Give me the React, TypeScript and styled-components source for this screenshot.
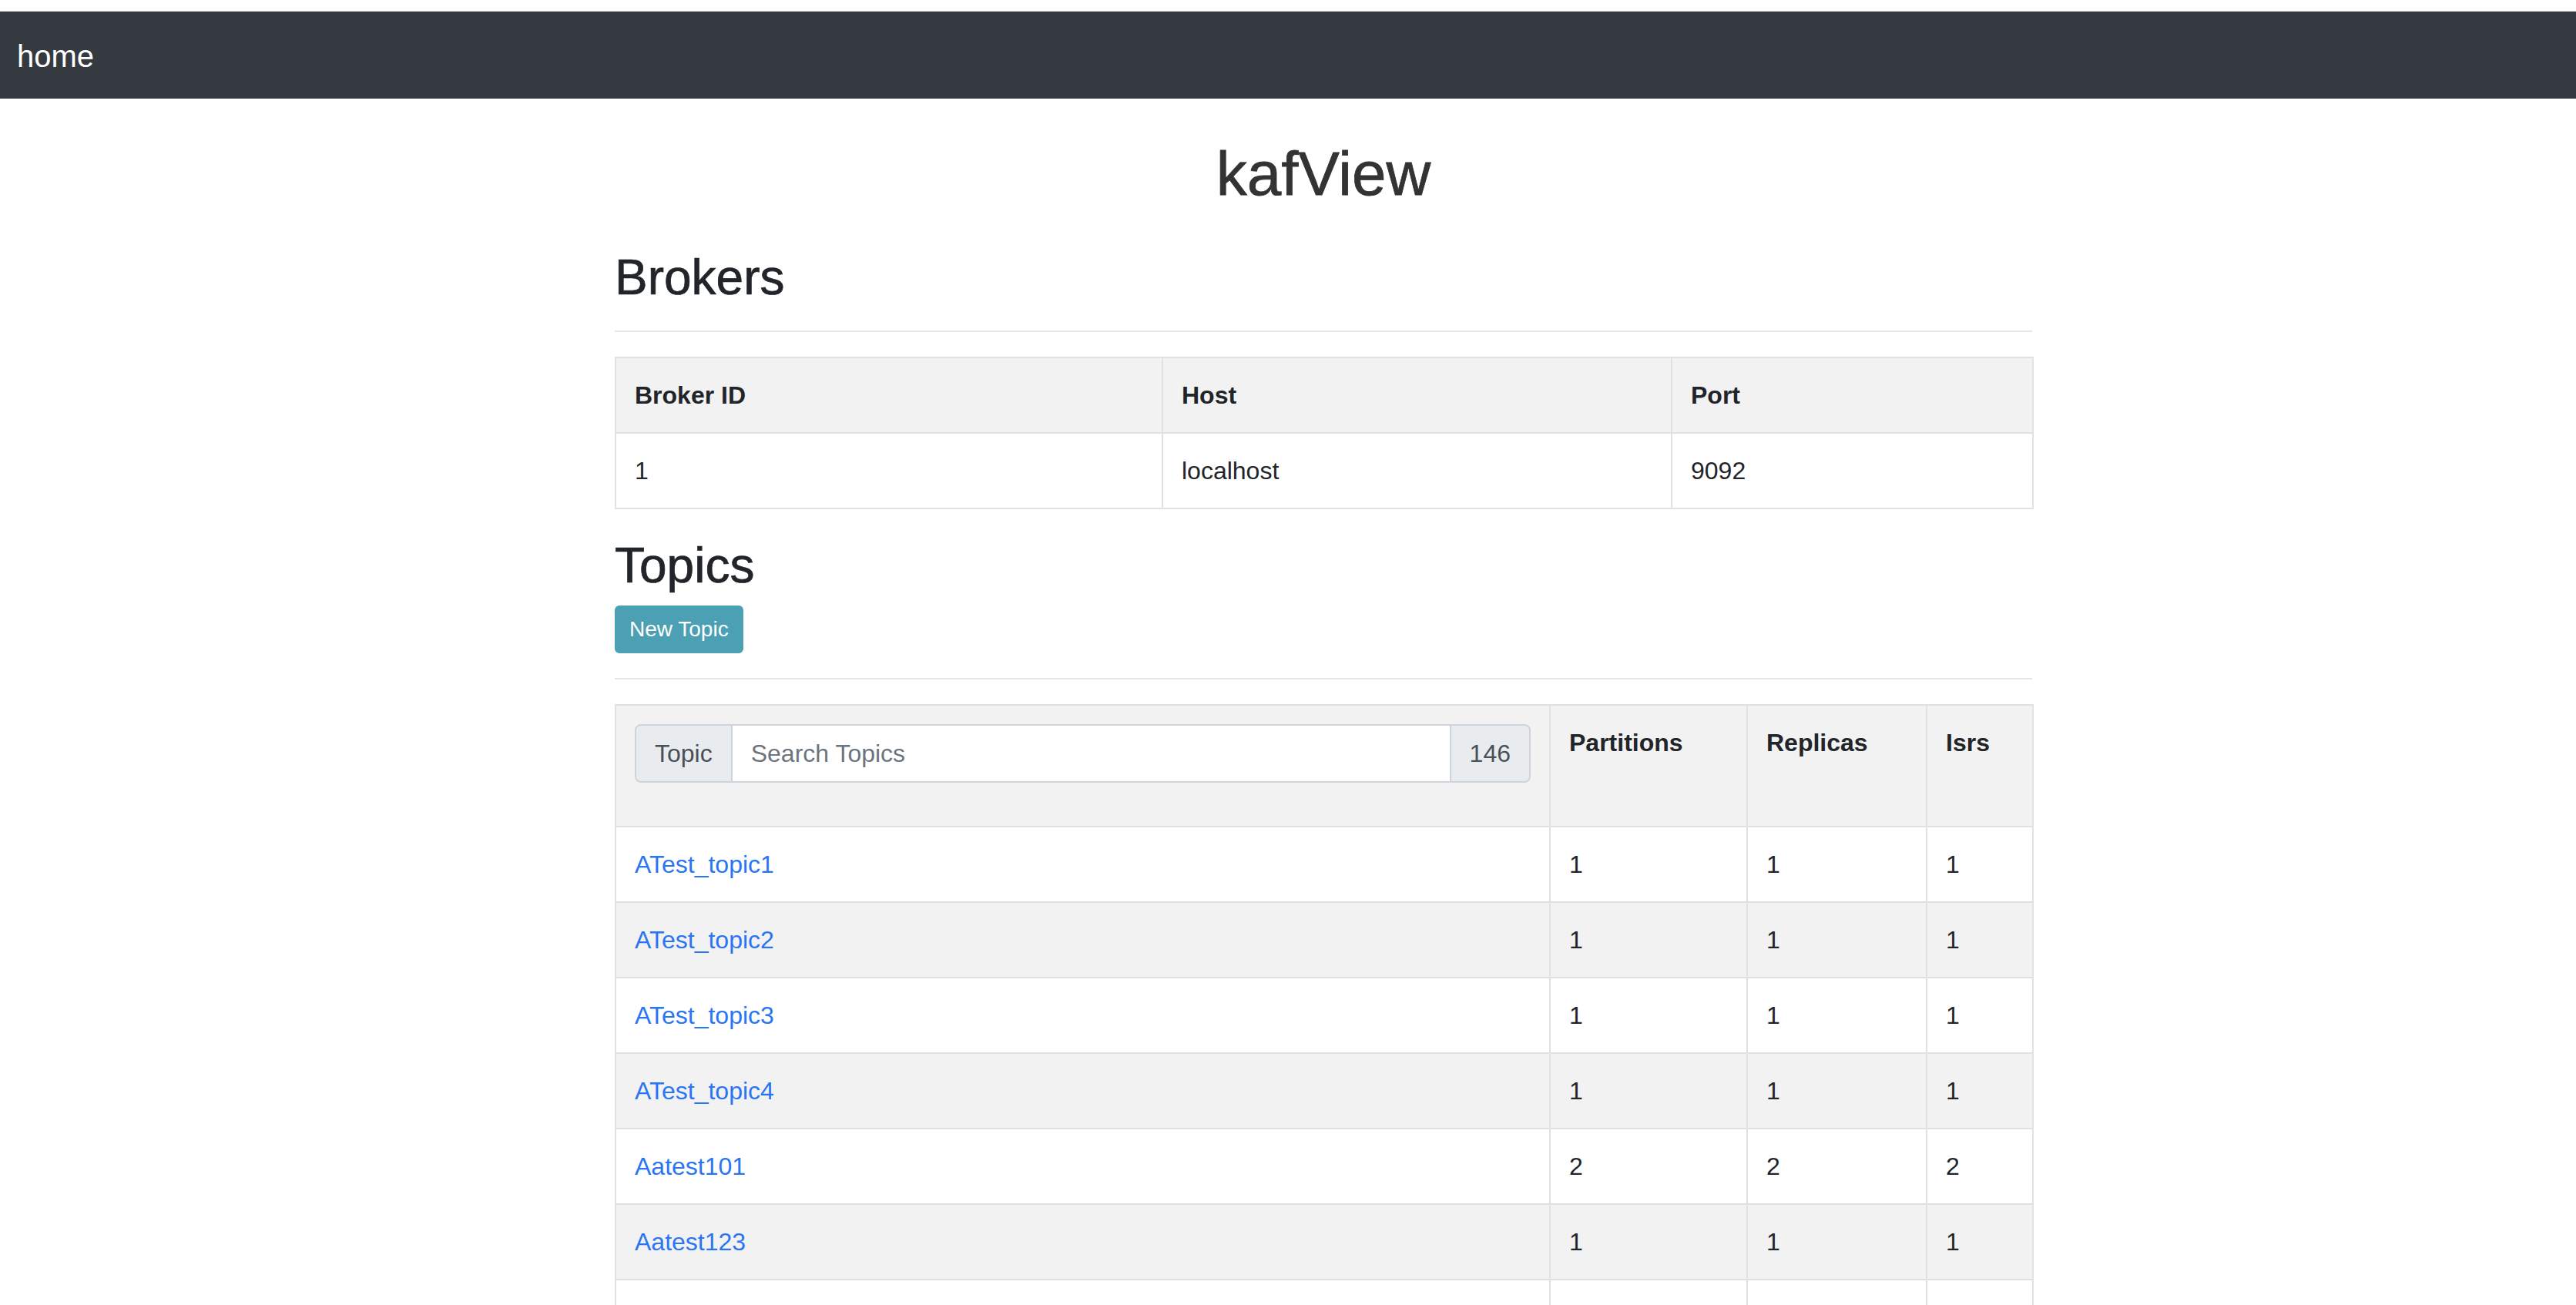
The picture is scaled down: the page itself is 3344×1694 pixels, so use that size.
import React from 'react';
import styled, { createGlobalStyle } from 'styled-components';

const GlobalStyle = createGlobalStyle`
  html, body {
    margin: 0;
    padding: 0;
    background: #fff;
  }
  body {
    font-family: "Liberation Sans", Arial, Helvetica, sans-serif;
    font-size: 32px;
    line-height: 1.5;
    color: #212529;
  }
  * {
    box-sizing: border-box;
  }
`;

const TopStrip = styled.div`
  height: 15px;
  background: #fff;
  border-bottom: 1px solid #e4e4e4;
`;

const Navbar = styled.nav`
  height: 113px;
  background: #343a40;
  display: flex;
  align-items: center;
  padding: 3px 22px 0;
`;

const Brand = styled.a`
  color: #fff;
  font-size: 40px;
  line-height: 60px;
  text-decoration: none;
`;

const Main = styled.main`
  width: 1840px;
  margin-left: 798px;
  padding-bottom: 64px;
  display: flex;
  flex-direction: column;
`;

// headings are medium weight in the original, fake it with a thin stroke
const Title = styled.h1`
  margin: 50px 0 0;
  font-size: 80px;
  line-height: 96px;
  font-weight: 400;
  text-align: center;
  color: #333;
  -webkit-text-stroke: 0.8px #333;
`;

const SectionTitle = styled.h2<{ $top: number }>`
  margin: ${(p) => p.$top}px 0 0;
  font-size: 64px;
  line-height: 77px;
  font-weight: 400;
  color: #212529;
  -webkit-text-stroke: 0.7px #212529;
`;

const Button = styled.button`
  align-self: flex-start;
  margin: 13px 0 2px;
  padding: 8px 17px;
  font-family: inherit;
  font-size: 28px;
  line-height: 42px;
  color: #fff;
  background: #4ba0b4;
  border: 2px solid #4ba0b4;
  border-radius: 6px;
  cursor: pointer;
`;

const Divider = styled.hr`
  width: 100%;
  margin: 30px 0 32px;
  border: 0;
  border-top: 2px solid #e5e5e5;
`;

const Table = styled.table`
  width: 100%;
  border-collapse: collapse;
  table-layout: fixed;
  border: 2px solid #dee2e6;
`;

const Col = styled.col<{ $w: number }>`
  width: ${(p) => p.$w}px;
`;

const Row = styled.tr<{ $shaded?: boolean }>`
  background: ${(p) => (p.$shaded ? '#f2f2f2' : '#fff')};
`;

const Cell = styled.td<{ $head?: boolean }>`
  border: 2px solid #dee2e6;
  padding: 24px;
  vertical-align: top;
  line-height: 48px;
  font-weight: ${(p) => (p.$head ? 700 : 400)};
  white-space: nowrap;
`;

const TopicLink = styled.a`
  color: #2a75f3;
  text-decoration: none;
`;

const InputGroup = styled.div`
  display: flex;
  height: 76px;
  margin-bottom: 32px;
`;

const Addon = styled.span<{ $side: 'left' | 'right' }>`
  display: flex;
  align-items: center;
  padding: 0 24px;
  background: #e9ecef;
  border: 2px solid #ced4da;
  color: #495057;
  font-size: 32px;
  font-weight: 400;
  border-radius: ${(p) => (p.$side === 'left' ? '8px 0 0 8px' : '0 8px 8px 0')};
`;

const SearchInput = styled.input`
  flex: 1;
  min-width: 0;
  height: 100%;
  padding: 0 24px;
  border: 2px solid #ced4da;
  border-left: 0;
  border-right: 0;
  font-family: inherit;
  font-size: 32px;
  color: #495057;
  background: #fff;
  outline: none;
  &::placeholder {
    color: #6c757d;
  }
`;

const brokers = [{ id: 1, host: 'localhost', port: 9092 }];

const topics = [
  { name: 'ATest_topic1', partitions: 1, replicas: 1, isrs: 1 },
  { name: 'ATest_topic2', partitions: 1, replicas: 1, isrs: 1 },
  { name: 'ATest_topic3', partitions: 1, replicas: 1, isrs: 1 },
  { name: 'ATest_topic4', partitions: 1, replicas: 1, isrs: 1 },
  { name: 'Aatest101', partitions: 2, replicas: 2, isrs: 2 },
  { name: 'Aatest123', partitions: 1, replicas: 1, isrs: 1 },
  { name: 'Aatest124', partitions: 1, replicas: 1, isrs: 1 },
  { name: 'Aatest125', partitions: 1, replicas: 1, isrs: 1 },
  { name: 'Aatest200', partitions: 3, replicas: 1, isrs: 1 },
];

export default function App() {
  return (
    <>
      <GlobalStyle />
      <TopStrip />
      <Navbar>
        <Brand href="#">home</Brand>
      </Navbar>
      <Main>
        <Title>kafView</Title>

        <SectionTitle $top={48}>Brokers</SectionTitle>
        <Divider />
        <Table>
          <colgroup>
            <Col $w={710} />
            <Col $w={661} />
            <Col $w={469} />
          </colgroup>
          <tbody>
            <Row $shaded>
              <Cell $head>Broker ID</Cell>
              <Cell $head>Host</Cell>
              <Cell $head>Port</Cell>
            </Row>
            {brokers.map((b) => (
              <Row key={b.id}>
                <Cell>{b.id}</Cell>
                <Cell>{b.host}</Cell>
                <Cell>{b.port}</Cell>
              </Row>
            ))}
          </tbody>
        </Table>

        <SectionTitle $top={35}>Topics</SectionTitle>
        <Button>New Topic</Button>
        <Divider />
        <Table>
          <colgroup>
            <Col $w={1213} />
            <Col $w={256} />
            <Col $w={233} />
            <Col $w={138} />
          </colgroup>
          <tbody>
            <Row $shaded>
              <Cell>
                <InputGroup>
                  <Addon $side="left">Topic</Addon>
                  <SearchInput placeholder="Search Topics" />
                  <Addon $side="right">146</Addon>
                </InputGroup>
              </Cell>
              <Cell $head>Partitions</Cell>
              <Cell $head>Replicas</Cell>
              <Cell $head>Isrs</Cell>
            </Row>
            {topics.map((t, i) => (
              <Row key={t.name} $shaded={i % 2 === 1}>
                <Cell>
                  <TopicLink href="#">{t.name}</TopicLink>
                </Cell>
                <Cell>{t.partitions}</Cell>
                <Cell>{t.replicas}</Cell>
                <Cell>{t.isrs}</Cell>
              </Row>
            ))}
          </tbody>
        </Table>
      </Main>
    </>
  );
}
